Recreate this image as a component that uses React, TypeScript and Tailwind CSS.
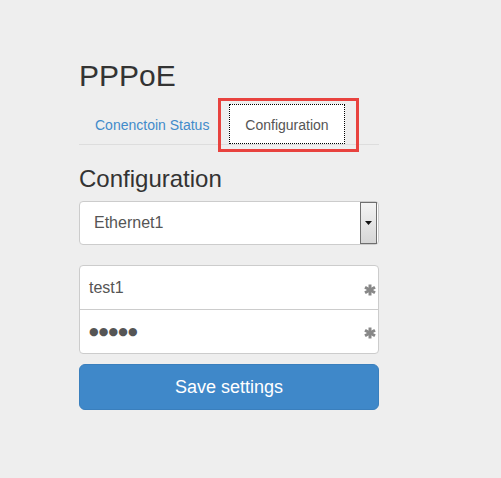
import React from "react";

function Asterisk() {
  return (
    <svg width="12" height="12" viewBox="0 0 12 12" className="block">
      <g stroke="#888888" strokeWidth="3" strokeLinecap="butt">
        <line x1="6" y1="0.5" x2="6" y2="11.5" />
        <line x1="1" y1="3.2" x2="11" y2="8.8" />
        <line x1="1" y1="8.8" x2="11" y2="3.2" />
      </g>
    </svg>
  );
}

export default function App() {
  return (
    <div
      className="w-[501px] h-[478px] bg-[#eeeeee] overflow-hidden"
      style={{ fontFamily: '"Liberation Sans", Arial, sans-serif' }}
    >
      <div className="ml-[79px] w-[300px] pt-[59px]">
        <h2 className="text-[30px] leading-[33px] text-[#333333]">PPPoE</h2>

        <div className="mt-[12px] flex h-[41px] border-b border-[#dddddd]">
          <a className="w-[148px] h-[40px] pl-[16px] text-[14px] leading-[20px] pt-[11px] text-[#428bca]">
            Conenctoin Status
          </a>
          <div className="relative ml-[2px]">
            <div className="w-[116px] h-[40px] bg-white outline-1 outline-dotted outline-black -outline-offset-1 text-[14px] leading-[20px] pt-[11px] text-center text-[#555555]">
              Configuration
            </div>
            <div className="absolute -left-[11px] -top-[6px] w-[141px] h-[54px] border-[3px] border-[#e8423e]" />
          </div>
        </div>

        <h3 className="mt-[21px] text-[24px] leading-[26px] text-[#333333]">Configuration</h3>

        <div className="relative mt-[9px] h-[44px] bg-white border border-[#cccccc] rounded-[4px] flex items-center pl-[14px] text-[16px] text-[#555555]">
          Ethernet1
          <div className="absolute right-[1px] top-[0px] bottom-[0px] w-[17px] border border-[#6f6f6f] bg-gradient-to-b from-[#f4f4f4] to-[#d6d6d6] flex items-center justify-center">
            <svg width="7" height="4" viewBox="0 0 7 4">
              <polygon points="0,0 7,0 3.5,4" fill="#111" />
            </svg>
          </div>
        </div>

        <div className="mt-[20px] bg-white border border-[#cccccc] rounded-[4px]">
          <div className="h-[43px] flex items-center justify-between pl-[9px] pr-[2px] text-[16px] text-[#555555]">
            <span>test1</span>
            <span className="mt-[4px]"><Asterisk /></span>
          </div>
          <div className="h-px bg-[#cccccc]" />
          <div className="h-[43px] flex items-center justify-between pl-[9px] pr-[2px] text-[#555555]">
            <span
              className="text-[11px] tracking-[0.15px] leading-none"
              style={{ fontFamily: '"DejaVu Sans", sans-serif' }}
            >
              ●●●●●
            </span>
            <span className="mt-[2px]"><Asterisk /></span>
          </div>
        </div>

        <button className="mt-[10px] w-[300px] h-[46px] rounded-[6px] bg-[#3f88c9] border border-[#3a7fbd] text-white text-[18px] leading-none">
          Save settings
        </button>
      </div>
    </div>
  );
}
